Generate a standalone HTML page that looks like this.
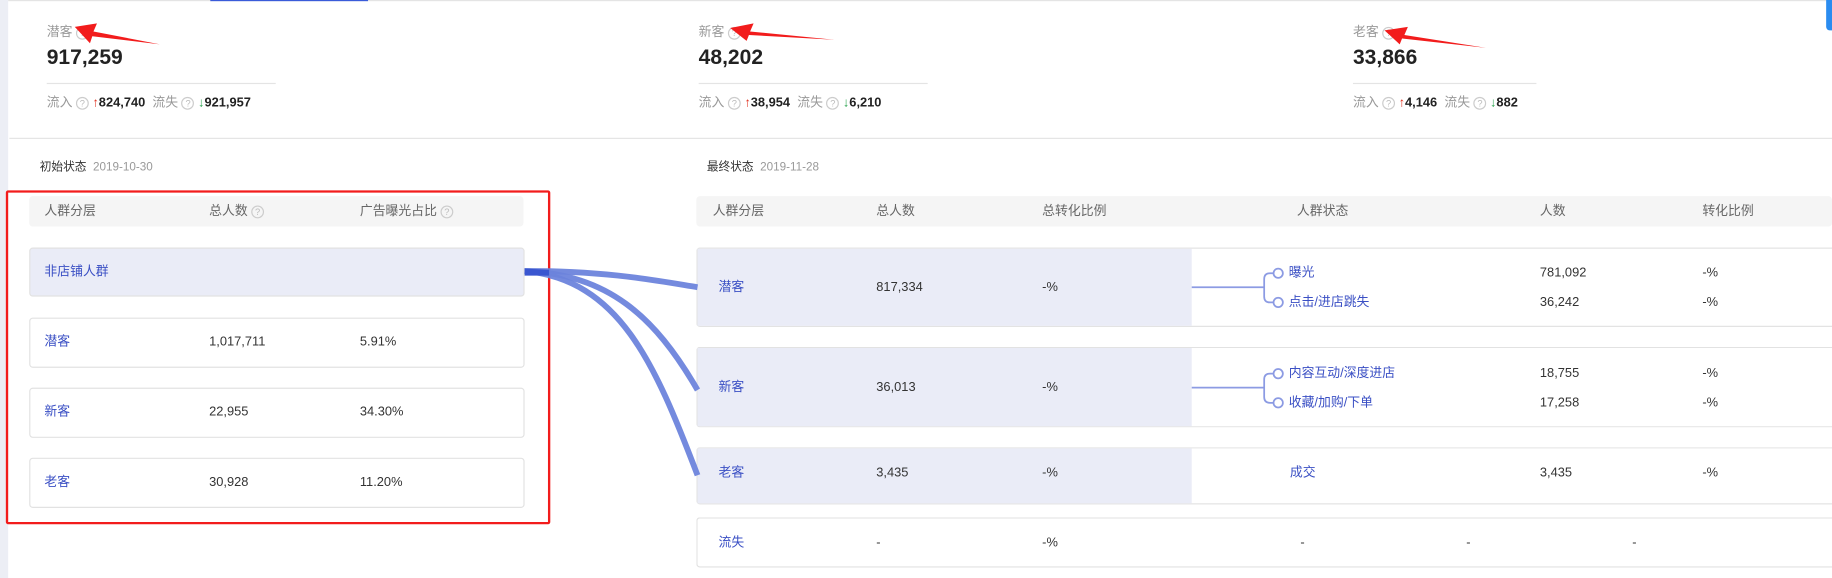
<!DOCTYPE html>
<html><head><meta charset="utf-8">
<style>
html,body{margin:0;padding:0;width:1832px;height:578px;overflow:hidden;background:#fff}
#w{position:absolute;left:0;top:0;width:1568px;height:495px;transform:scale(1.16837,1.16768);transform-origin:0 0;font-family:"Liberation Sans","Noto Sans CJK SC",sans-serif;font-size:11px;color:#333}
.a{position:absolute;white-space:nowrap;line-height:14px}
.q{display:inline-block;width:9px;height:9px;border:1px solid #ccc;border-radius:50%;color:#bbb;font-size:8px;line-height:9px;text-align:center;vertical-align:0;margin-left:3px}
.lab{color:#999;font-size:11px}
.num{font-weight:bold;font-size:18px;color:#222;line-height:22px}
.sm{font-size:11px;color:#999}
.sm b{color:#222;font-size:11px}
.up{color:#e0301e;font-weight:bold}
.dn{color:#2aa44f;font-weight:bold}
.hd{position:absolute;background:#f5f5f5;height:26px;border-radius:3px}
.row{position:absolute;border:1px solid #e2e2e2;border-radius:3px;background:#fff;box-sizing:border-box}
.bl{color:#3a4fc4}
.g{color:#666}
</style></head><body><div id="w">
<div class="a" style="left:0;top:0;width:7px;height:495px;background:#eceef5"></div>
<div class="a" style="left:7px;top:0;width:1561px;height:1px;background:#e4e4e4"></div>
<div class="a" style="left:180px;top:0;width:135px;height:1px;background:#3a5bd9"></div>
<div class="a" style="left:1563px;top:0;width:5px;height:26px;background:#2a8cf0;border-radius:0 0 0 3px"></div>

<div class="a lab" style="left:40px;top:21px">潜客<span class="q">?</span></div>
<div class="a num" style="left:40px;top:38px">917,259</div>
<div class="a" style="left:40px;top:71px;width:196px;height:1px;background:#e4e4e4"></div>
<div class="a sm" style="left:40px;top:81px">流入<span class="q">?</span> <span class="up">↑</span><b>824,740</b>&nbsp; 流失<span class="q">?</span> <span class="dn">↓</span><b>921,957</b></div>

<div class="a lab" style="left:598px;top:21px">新客<span class="q">?</span></div>
<div class="a num" style="left:598px;top:38px">48,202</div>
<div class="a" style="left:598px;top:71px;width:196px;height:1px;background:#e4e4e4"></div>
<div class="a sm" style="left:598px;top:81px">流入<span class="q">?</span> <span class="up">↑</span><b>38,954</b>&nbsp; 流失<span class="q">?</span> <span class="dn">↓</span><b>6,210</b></div>

<div class="a lab" style="left:1158px;top:21px">老客<span class="q">?</span></div>
<div class="a num" style="left:1158px;top:38px">33,866</div>
<div class="a" style="left:1158px;top:71px;width:157px;height:1px;background:#e4e4e4"></div>
<div class="a sm" style="left:1158px;top:81px">流入<span class="q">?</span> <span class="up">↑</span><b>4,146</b>&nbsp; 流失<span class="q">?</span> <span class="dn">↓</span><b>882</b></div>

<div class="a" style="left:8px;top:118px;width:1560px;height:1px;background:#e4e4e4"></div>
<div class="a" style="left:34px;top:137px;font-size:10px;color:#333">初始状态 &nbsp;<span style="color:#999">2019-10-30</span></div>
<div class="a" style="left:605px;top:137px;font-size:10px;color:#333">最终状态 &nbsp;<span style="color:#999">2019-11-28</span></div>

<!-- left table -->
<div class="hd" style="left:25px;top:168px;width:423px"></div>
<div class="a g" style="left:38px;top:174px">人群分层</div>
<div class="a g" style="left:179px;top:174px">总人数<span class="q">?</span></div>
<div class="a g" style="left:308px;top:174px">广告曝光占比<span class="q">?</span></div>
<div class="row" style="left:25px;top:212px;width:424px;height:42px;background:#eaecf7"></div>
<div class="a bl" style="left:38px;top:226px">非店铺人群</div>
<div class="row" style="left:25px;top:272px;width:424px;height:43px"></div>
<div class="a bl" style="left:38px;top:286px">潜客</div><div class="a" style="left:179px;top:286px">1,017,711</div><div class="a" style="left:308px;top:286px">5.91%</div>
<div class="row" style="left:25px;top:332px;width:424px;height:43px"></div>
<div class="a bl" style="left:38px;top:346px">新客</div><div class="a" style="left:179px;top:346px">22,955</div><div class="a" style="left:308px;top:346px">34.30%</div>
<div class="row" style="left:25px;top:392px;width:424px;height:43px"></div>
<div class="a bl" style="left:38px;top:406px">老客</div><div class="a" style="left:179px;top:406px">30,928</div><div class="a" style="left:308px;top:406px">11.20%</div>
<div class="a" style="left:5px;top:163px;width:462px;height:282px;border:2px solid #f21c1c;border-radius:2px"></div>

<!-- right table -->
<div class="hd" style="left:596px;top:168px;width:972px"></div>
<div class="a g" style="left:610px;top:174px">人群分层</div>
<div class="a g" style="left:750px;top:174px">总人数</div>
<div class="a g" style="left:892px;top:174px">总转化比例</div>
<div class="a g" style="left:1110px;top:174px">人群状态</div>
<div class="a g" style="left:1318px;top:174px">人数</div>
<div class="a g" style="left:1457px;top:174px">转化比例</div>

<div class="row" style="left:596px;top:212px;width:980px;height:68px;border-right:none"></div>
<div class="a" style="left:597px;top:213px;width:423px;height:66px;background:#eaecf7"></div>
<div class="a bl" style="left:615px;top:239px">潜客</div><div class="a" style="left:750px;top:239px">817,334</div><div class="a" style="left:892px;top:239px">-%</div>
<div class="a bl" style="left:1103px;top:227px">曝光</div><div class="a" style="left:1318px;top:227px">781,092</div><div class="a" style="left:1457px;top:227px">-%</div>
<div class="a bl" style="left:1103px;top:252px">点击/进店跳失</div><div class="a" style="left:1318px;top:252px">36,242</div><div class="a" style="left:1457px;top:252px">-%</div>

<div class="row" style="left:596px;top:297px;width:980px;height:69px;border-right:none"></div>
<div class="a" style="left:597px;top:298px;width:423px;height:67px;background:#eaecf7"></div>
<div class="a bl" style="left:615px;top:325px">新客</div><div class="a" style="left:750px;top:325px">36,013</div><div class="a" style="left:892px;top:325px">-%</div>
<div class="a bl" style="left:1103px;top:313px">内容互动/深度进店</div><div class="a" style="left:1318px;top:313px">18,755</div><div class="a" style="left:1457px;top:313px">-%</div>
<div class="a bl" style="left:1103px;top:338px">收藏/加购/下单</div><div class="a" style="left:1318px;top:338px">17,258</div><div class="a" style="left:1457px;top:338px">-%</div>

<div class="row" style="left:596px;top:383px;width:980px;height:49px;border-right:none"></div>
<div class="a" style="left:597px;top:384px;width:423px;height:47px;background:#eaecf7"></div>
<div class="a bl" style="left:615px;top:398px">老客</div><div class="a" style="left:750px;top:398px">3,435</div><div class="a" style="left:892px;top:398px">-%</div>
<div class="a bl" style="left:1104px;top:398px">成交</div><div class="a" style="left:1318px;top:398px">3,435</div><div class="a" style="left:1457px;top:398px">-%</div>

<div class="row" style="left:596px;top:443px;width:980px;height:43px;border-right:none"></div>
<div class="a bl" style="left:615px;top:458px">流失</div><div class="a" style="left:750px;top:458px">-</div><div class="a" style="left:892px;top:458px">-%</div>
<div class="a" style="left:1113px;top:458px">-</div><div class="a" style="left:1255px;top:458px">-</div><div class="a" style="left:1397px;top:458px">-</div>

<svg class="a" style="left:0;top:0" width="1568" height="495" viewBox="0 0 1568 495">
<g fill="none" stroke="#6d84dc" stroke-width="5" stroke-opacity="0.95">
<path d="M449 232 C520 232 560 240 597 246"/>
<path d="M449 232 C520 235 560 270 597 334"/>
<path d="M449 232 C530 240 560 310 597 407"/>
</g>
<path d="M449 230 L470 231 L470 236 L449 236Z" fill="#3a56d0"/>
<g fill="none" stroke="#8c9be3" stroke-width="1.5">
<path d="M1020 246 H1082"/><path d="M1090 234 H1087 Q1082 234 1082 239 V254 Q1082 259 1087 259 H1090"/>
<circle cx="1094" cy="234" r="4" fill="#fff"/><circle cx="1094" cy="259" r="4" fill="#fff"/>
<path d="M1020 332 H1082"/><path d="M1090 320 H1087 Q1082 320 1082 325 V340 Q1082 345 1087 345 H1090"/>
<circle cx="1094" cy="320" r="4" fill="#fff"/><circle cx="1094" cy="345" r="4" fill="#fff"/>
</g>
<g fill="#f21c1c">
<path d="M137 38 L80 27 L83 20 L64 23 L77 37 L79 31 Z"/>
<path d="M714 34 L642 27 L645 20 L625 24 L639 35 L641 30 Z"/>
<path d="M1272 41 L1202 30 L1205 23 L1185 26 L1198 38 L1200 33 Z"/>
</g>
</svg>
</div></body></html>
